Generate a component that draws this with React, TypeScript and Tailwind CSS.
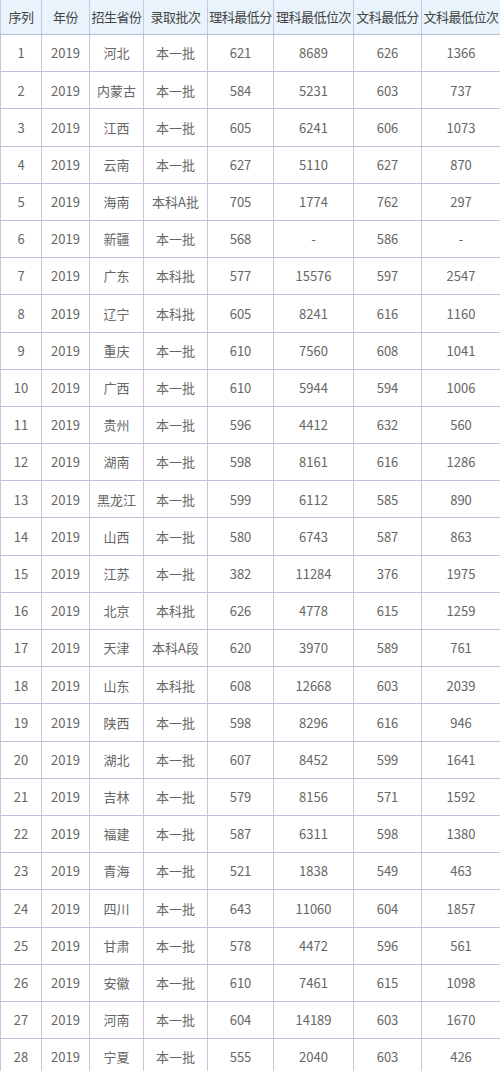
import React from "react";

const rows: string[][] = [
  ["1","2019","河北","本一批","621","8689","626","1366"],
  ["2","2019","内蒙古","本一批","584","5231","603","737"],
  ["3","2019","江西","本一批","605","6241","606","1073"],
  ["4","2019","云南","本一批","627","5110","627","870"],
  ["5","2019","海南","本科A批","705","1774","762","297"],
  ["6","2019","新疆","本一批","568","-","586","-"],
  ["7","2019","广东","本科批","577","15576","597","2547"],
  ["8","2019","辽宁","本科批","605","8241","616","1160"],
  ["9","2019","重庆","本一批","610","7560","608","1041"],
  ["10","2019","广西","本一批","610","5944","594","1006"],
  ["11","2019","贵州","本一批","596","4412","632","560"],
  ["12","2019","湖南","本一批","598","8161","616","1286"],
  ["13","2019","黑龙江","本一批","599","6112","585","890"],
  ["14","2019","山西","本一批","580","6743","587","863"],
  ["15","2019","江苏","本一批","382","11284","376","1975"],
  ["16","2019","北京","本科批","626","4778","615","1259"],
  ["17","2019","天津","本科A段","620","3970","589","761"],
  ["18","2019","山东","本科批","608","12668","603","2039"],
  ["19","2019","陕西","本一批","598","8296","616","946"],
  ["20","2019","湖北","本一批","607","8452","599","1641"],
  ["21","2019","吉林","本一批","579","8156","571","1592"],
  ["22","2019","福建","本一批","587","6311","598","1380"],
  ["23","2019","青海","本一批","521","1838","549","463"],
  ["24","2019","四川","本一批","643","11060","604","1857"],
  ["25","2019","甘肃","本一批","578","4472","596","561"],
  ["26","2019","安徽","本一批","610","7461","615","1098"],
  ["27","2019","河南","本一批","604","14189","603","1670"],
  ["28","2019","宁夏","本一批","555","2040","603","426"],
];

const headers = ["序列","年份","招生省份","录取批次","理科最低分","理科最低位次","文科最低分","文科最低位次"];

const cols = "grid grid-cols-[41px_48px_54px_64px_66px_80px_68px_79px]";

export default function App() {
  return (
    <div
      className="w-[500px] h-[1071px] overflow-hidden bg-white"
      style={{ fontFamily: '"Noto Sans CJK SC", "Noto Sans", sans-serif' }}
    >
      <div className={`${cols} h-[35px] bg-[#e9f3fb] border-b border-[#bdb8d6]`}>
        {headers.map((h, i) => (
          <div
            key={i}
            className="flex items-center justify-center whitespace-nowrap text-[13px] tracking-[-0.5px] text-[#444] border-l border-[#c9c5de]"
          >
            {h}
          </div>
        ))}
      </div>
      {rows.map((r, ri) => (
        <div key={ri} className={`${cols} h-[37.2px] border-b border-[#c3bedb]`}>
          {r.map((c, ci) => (
            <div
              key={ci}
              className="flex items-center justify-center whitespace-nowrap text-[13px] text-[#666] border-l border-[#c9c5de]"
            >
              {c}
            </div>
          ))}
        </div>
      ))}
    </div>
  );
}
